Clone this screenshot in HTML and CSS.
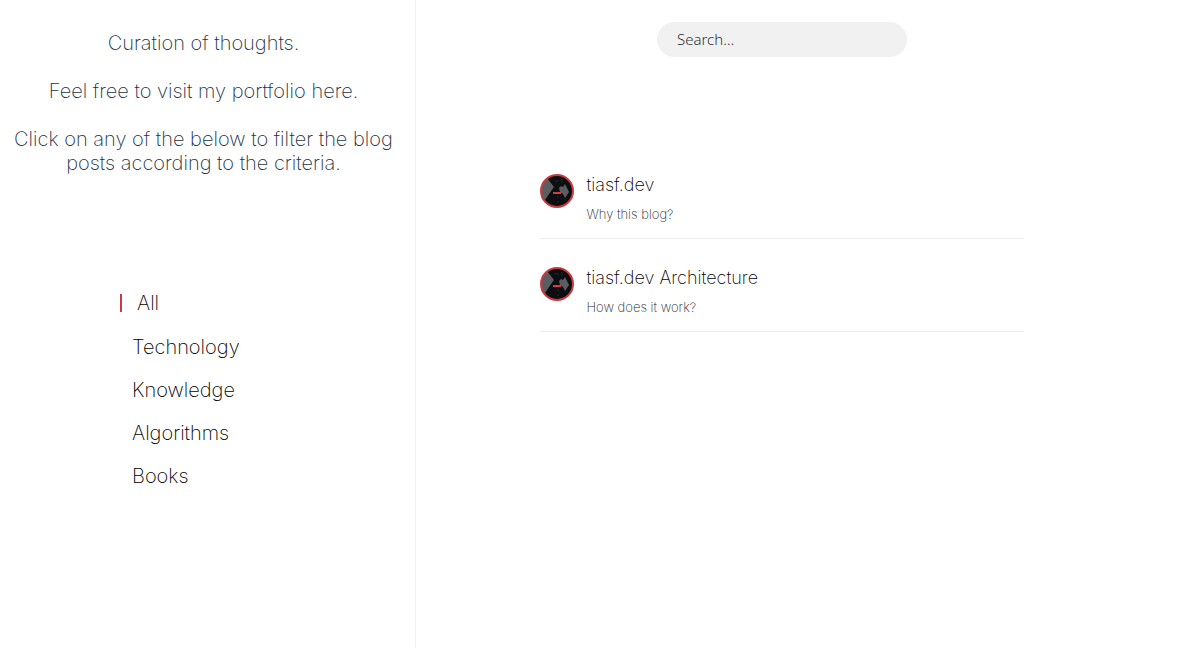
FILE: index.html
```html
<!DOCTYPE html>
<html lang="en">
<head>
<meta charset="utf-8">
<meta name="viewport" content="width=device-width, initial-scale=1">
<title>tiasf.dev</title>
<link rel="stylesheet" href="styles.css">
</head>
<body>
<svg class="symbols" aria-hidden="true">
  <symbol id="avatar" viewBox="0 0 34 34">
    <circle cx="17" cy="17" r="16" fill="#0d0e11"/>
    <path d="M2 10 7 4 14 13 9 20 5 26 2 22Z" fill="#5c5d60"/>
    <path d="M19 14 21 12 23 13 25 10 27 14 29 18 25 24 23 20 20 18Z" fill="#5c5d60"/>
    <path d="M15 7h4M22 5v4M18 22v2M17 28h2" stroke="#24262a" stroke-width="1" fill="none"/>
    <path d="M13 19h8" stroke="#d83c3f" stroke-width="2"/>
    <circle cx="17" cy="17" r="16" fill="none" stroke="#c83c40" stroke-width="2"/>
  </symbol>
</svg>
<div class="layout">
  <aside class="sidebar">
    <div class="intro">
      <p>Curation of thoughts.</p>
      <p>Feel free to visit my portfolio <a href="#portfolio">here.</a></p>
      <p>Click on any of the below to filter the blog posts according to the criteria.</p>
    </div>
    <nav class="filters" aria-label="Filter posts">
      <a class="filter active" href="#all">All</a>
      <a class="filter" href="#technology">Technology</a>
      <a class="filter" href="#knowledge">Knowledge</a>
      <a class="filter" href="#algorithms">Algorithms</a>
      <a class="filter" href="#books">Books</a>
    </nav>
  </aside>
  <main class="content">
    <input class="search" type="search" placeholder="Search…" aria-label="Search posts">
    <div class="posts">
      <article class="post">
        <svg class="avatar" aria-hidden="true"><use href="#avatar"/></svg>
        <div>
          <h2><a href="#why">tiasf.dev</a></h2>
          <p>Why this blog?</p>
        </div>
      </article>
      <article class="post">
        <svg class="avatar" aria-hidden="true"><use href="#avatar"/></svg>
        <div>
          <h2><a href="#how">tiasf.dev Architecture</a></h2>
          <p>How does it work?</p>
        </div>
      </article>
    </div>
  </main>
</div>
</body>
</html>
```

FILE: styles.css
```css
* {
  box-sizing: border-box;
}

body {
  margin: 0;
  background: #fff;
  color: #000;
  font-family: Inter, "Liberation Sans", sans-serif;
  font-weight: 200;
}

a {
  color: inherit;
  text-decoration: none;
}

.symbols {
  display: none;
}

.layout {
  display: grid;
  grid-template-columns: 34.87% 1fr;
  min-height: 100vh;
}

.sidebar {
  border-right: 1px solid #f0f0f0;
}

.intro {
  padding: 31px 16px 0 8px;
  color: #1c3044;
  font-size: 20px;
  line-height: 24px;
  text-align: center;
}

.intro p {
  margin: 0 0 24px;
}

.filters {
  display: flex;
  flex-direction: column;
  align-items: flex-start;
  gap: 19px;
  margin: 116px 0 0 120px;
  font-size: 20px;
  line-height: 24px;
}

.filter {
  padding-left: 12px;
}

.active {
  display: flex;
  align-items: center;
  gap: 15px;
  margin-bottom: 1px;
  padding-left: 0;
}

.active::before {
  width: 2px;
  height: 18px;
  background: #c83c46;
  content: "";
}

.content {
  display: flex;
  flex-direction: column;
  align-items: center;
  padding: 22px 45px 0 0;
}

.search {
  width: 250px;
  height: 35px;
  padding: 0 20px 2px;
  border: 0;
  border-radius: 18px;
  background: #f1f1f1;
  font: 300 15px "Noto Sans", sans-serif;
  appearance: none;
}

.search::placeholder {
  color: #333;
}

.posts {
  width: 66%;
  margin-top: 117px;
}

.post {
  display: flex;
  gap: 12px;
  margin-bottom: 28px;
  padding-bottom: 16px;
  border-bottom: 1px solid #ececec;
}

.avatar {
  flex: none;
  width: 34px;
  height: 34px;
}

.post h2 {
  margin: 0 0 10px;
  font-size: 18px;
  font-weight: 200;
  line-height: 22px;
}

.post p {
  margin: 0;
  color: #212529;
  font-size: 13px;
  line-height: 16px;
}
```
